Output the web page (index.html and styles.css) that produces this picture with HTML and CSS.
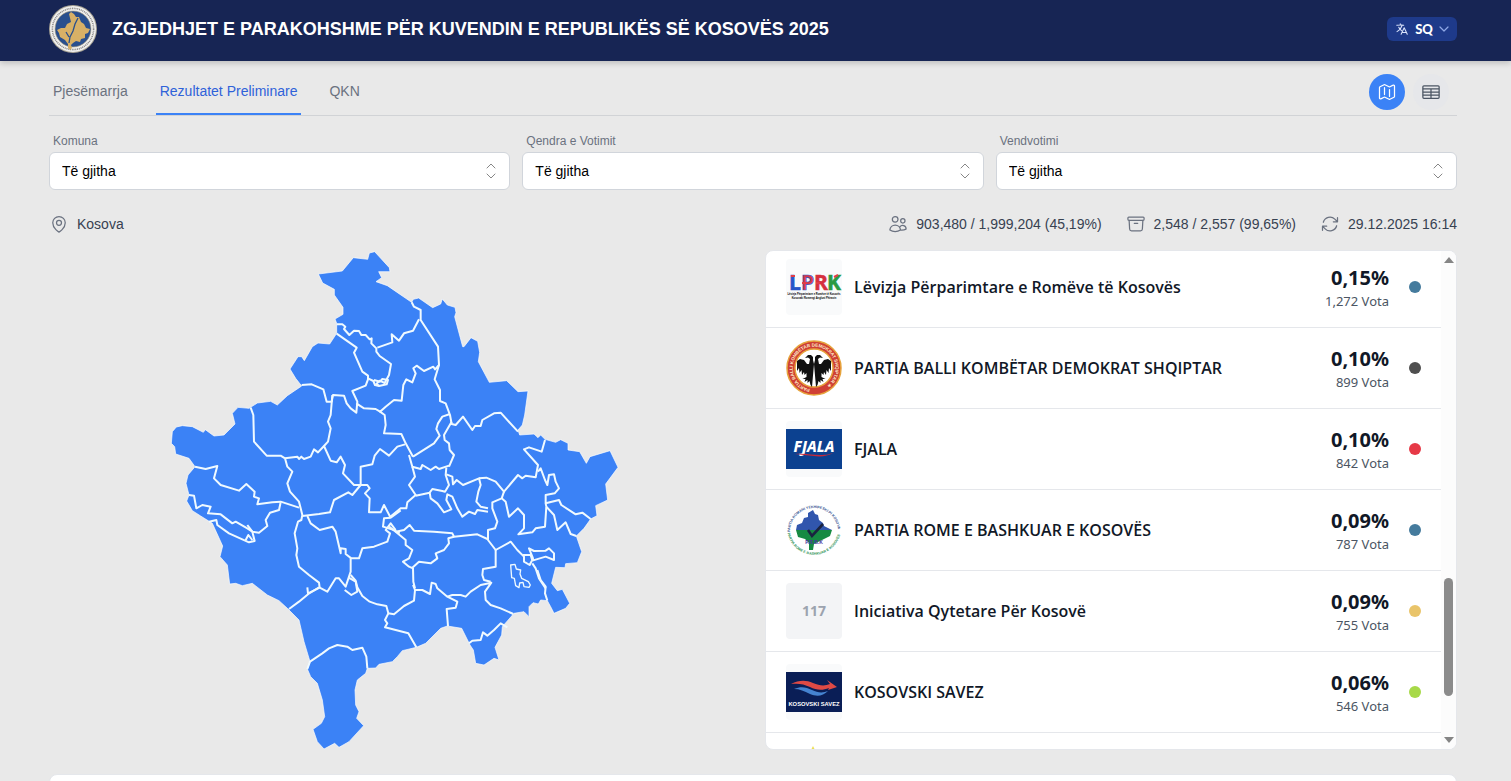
FILE: index.html
```html
<!DOCTYPE html>
<html lang="sq">
<head>
    <meta charset="UTF-8">
    <meta name="viewport" content="width=device-width, initial-scale=1.0">
    <title>Zgjedhjet e Parakohshme 2025</title>
    <link rel="stylesheet" href="styles.css">
</head>
<body>

    <header class="header">
        <svg class="seal" viewBox="0 0 48 48" aria-hidden="true">
            <circle cx="24" cy="24" r="24" fill="#a9a496"/>
            <circle cx="24" cy="24" r="23" fill="#f1f1f0"/>
            <circle cx="24" cy="24" r="20.6" fill="none" stroke="#8a8784" stroke-width="1.6" stroke-dasharray="1 .8"/>
            <circle cx="24" cy="24" r="18" fill="#294f8e" stroke="#b7a57c" stroke-width=".6"/>
            <path fill="#d8b066" d="M20 9l2-2 3 2 2 3 3 0 2 5 3 2 2 4 4 1-2 4-3 1 0 4-4 1-1 3-4-1-3 2-2 2 1 3-2 2-2-2 0-4-3-4-5-3-1-4-2-3 4-2 4 0 2-4 4-2z"/>
            <path fill="none" stroke="#294f8e" stroke-width="1.3" d="M29 13l-3 6-2 7-3 6-1 6M17 27l3 5"/>
        </svg>
        <h1>ZGJEDHJET E PARAKOHSHME PËR KUVENDIN E REPUBLIKËS SË KOSOVËS 2025</h1>
        <button class="lang" type="button">
            <svg width="14" height="14" viewBox="0 0 24 24" fill="none" stroke="#dbe4fb" stroke-width="1.8" stroke-linecap="round" stroke-linejoin="round"><path d="M10.5 21l5.25-11.25L21 21m-9-3h7.5M3 5.6A48 48 0 0 1 9 5.25m0 0a48 48 0 0 1 3.3.1M9 5.25V3m3.3 2.4A18 18 0 0 1 3.4 16.5m8.9-11.1c.9 0 1.8.1 2.7.2M6.4 9a18 18 0 0 0 4.8 5.8"/></svg>
            <span>SQ</span>
            <svg width="10" height="10" viewBox="0 0 10 10" fill="none" stroke="#8fa8e6" stroke-width="1.2" stroke-linecap="round" stroke-linejoin="round"><path d="M1 3l4 4 4-4"/></svg>
        </button>
    </header>

    <main class="container">
        <div class="toolbar">
            <nav class="tabs">
                <a href="#pjesemarrja">Pjesëmarrja</a>
                <a href="#rezultatet" class="active">Rezultatet Preliminare</a>
                <a href="#qkn">QKN</a>
            </nav>
            <div class="views">
                <button class="view view-on" type="button" aria-label="Harta">
                    <svg width="20" height="20" viewBox="0 0 24 24" fill="none" stroke="#fff" stroke-width="1.5" stroke-linecap="round" stroke-linejoin="round"><path d="M9 6.75V15m6-6v8.25m.5 3.5l4.9-2.4c.4-.2.6-.6.6-1V4.8c0-.8-.9-1.4-1.6-1L15.5 5.7c-.3.2-.7.2-1 0L9.5 3.25a1.1 1.1 0 0 0-1 0L3.6 5.7c-.4.2-.6.5-.6 1v12.5c0 .8.9 1.4 1.6 1l3.9-1.95c.3-.15.7-.15 1 0l5 2.5c.3.15.7.15 1 0z"/></svg>
                </button>
                <button class="view" type="button" aria-label="Tabela">
                    <svg width="20" height="20" viewBox="0 0 24 24" fill="none" stroke="#4b5563" stroke-width="1.5" stroke-linejoin="round"><rect x="2.25" y="4.5" width="19.5" height="15" rx="1.2"/><path d="M2.25 8.25h19.5M2.25 12h19.5M2.25 15.75h19.5M12 8.25v11.25"/></svg>
                </button>
            </div>
        </div>

        <form class="filters">
            <div class="field">
                <label for="komuna">Komuna</label>
                <select id="komuna"><option>Të gjitha</option></select>
                <svg class="updown" viewBox="0 0 12 16"><path d="M2 5l4-4 4 4M2 11l4 4 4-4"/></svg>
            </div>
            <div class="field">
                <label for="qendra">Qendra e Votimit</label>
                <select id="qendra"><option>Të gjitha</option></select>
                <svg class="updown" viewBox="0 0 12 16"><path d="M2 5l4-4 4 4M2 11l4 4 4-4"/></svg>
            </div>
            <div class="field">
                <label for="vendvotimi">Vendvotimi</label>
                <select id="vendvotimi"><option>Të gjitha</option></select>
                <svg class="updown" viewBox="0 0 12 16"><path d="M2 5l4-4 4 4M2 11l4 4 4-4"/></svg>
            </div>
        </form>

        <div class="summary">
            <div class="stat place">
                <svg viewBox="0 0 24 24"><path d="M15 10.5a3 3 0 1 1-6 0 3 3 0 0 1 6 0zM19.5 10.5c0 7.1-7.5 11.25-7.5 11.25S4.5 17.6 4.5 10.5a7.5 7.5 0 1 1 15 0z"/></svg>
                <span>Kosova</span>
            </div>
            <div class="stat">
                <svg viewBox="0 0 24 24"><circle cx="8.6" cy="6.4" r="3.4"/><circle cx="17.8" cy="8.2" r="2.6"/><path d="M2.25 19.1a6.4 6.4 0 0 1 12.75 0v.1A12.3 12.3 0 0 1 8.6 21c-2.3 0-4.5-.6-6.35-1.8zM15 19.2c2.3.3 4.7-.1 6.700-1.100a4.100 4.100 0 0 0-7.500-2.500"/></svg>
                <span>903,480 / 1,999,204 (45,19%)</span>
            </div>
            <div class="stat">
                <svg viewBox="0 0 24 24"><path d="M20.25 7.5l-.6 10.6a2.25 2.25 0 0 1-2.25 2.15H6.6a2.25 2.25 0 0 1-2.25-2.15L3.75 7.5M10 11.25h4M3.4 7.5h17.2c.6 0 1.100-.5 1.100-1.100V4.900c0-.6-.5-1.100-1.100-1.100H3.400c-.6 0-1.100.5-1.100 1.100v1.500c0 .6.5 1.100 1.100 1.100z"/></svg>
                <span>2,548 / 2,557 (99,65%)</span>
            </div>
            <div class="stat">
                <svg viewBox="0 0 24 24"><path d="M16 9.35h5V4.4M3 19.6v-5h5M3 14.6l3.2 3.2a8.25 8.25 0 0 0 13.8-3.7M4 9.9a8.25 8.25 0 0 1 13.8-3.7L21 9.35"/></svg>
                <span>29.12.2025 16:14</span>
            </div>
        </div>

        <div class="results">
            <svg class="map" viewBox="18 15 1350 1500" role="img" aria-label="Harta e Kosovës">
                <path class="land" d="M463 87L535 78 568 38 611 43 616 24 632 20 676 68 678 80 644 80 653 98 636 110 670 122 705 146 743 172 748 163 764 159 806 188 830 177 835 162 850 180 873 187 876 203 872 215 896 305 900 305 921 278 941 289 947 322 943 350 976 412 1028 407 1062 440 1092 438 1082 510 1075 540 1062 555 1067 570 1110 567 1122 578 1130 570 1143 583 1175 592 1190 584 1212 595 1212 615 1247 620 1267 655 1278 635 1338 617 1362 667 1325 717 1331 765 1295 782 1299 812 1280 822 1260 850 1237 873 1253 920 1240 953 1205 956 1203 968 1175 967 1163 1015 1180 1037 1195 1033 1204 1050 1217 1075 1205 1090 1170 1105 1160 1085 1150 1067 1130 1065 1123 1077 1107 1073 1095 1085 1095 1115 1080 1100 1050 1105 1015 1145 1013 1170 993 1207 1005 1245 990 1240 960 1260 935 1255 928 1215 918 1200 893 1150 850 1143 830 1150 785 1195 757 1207 715 1217 700 1235 685 1250 645 1258 635 1269 610 1270 605 1285 580 1305 573 1335 575 1380 585 1400 578 1420 599 1442 555 1490 525 1507 512 1495 480 1512 460 1490 447 1453 472 1435 482 1415 475 1365 460 1315 440 1295 430 1272 438 1250 420 1190 405 1125 370 1090 345 1067 310 1050 265 1015 235 1022 215 1015 197 1017 190 960 168 935 176 903 145 835 110 813 85 797 68 768 75 750 66 715 72 690 93 665 75 640 35 627 32 605 22 595 25 560 37 546 55 542 85 545 118 562 124 554 150 573 180 570 213 537 205 505 222 487 255 490 280 474 320 469 340 480 370 452 413 423 395 400 378 372 402 335 413 335 421 347 445 305 462 294 497 297 518 265 518 235 513 222 537 208 537 187 511 150 511 133 476 114z"/>
                <g class="borders">
                    <!-- north west -->
                    <path d="M518 238h17l9 7-4 7 16 18 14-13 15 1 7 12h13l12 13 6-3-1 15 15 15v10l10 13 34 24-6 33-13 24-15-7-10 10 8 5"/>
                    <path d="M640 308L685 292 683 268 705 287 720 265 747 257 765 223"/>
                    <path d="M518 266L578 308 570 323 595 380 612 392 612 403 605 422 565 438 580 470 577 503 560 490 548 475 540 452 507 450 503 470 488 470 478 433 443 418 413 420"/>
                    <path d="M612 400l16 8 5 12 12 3 23-5 4-13-17-3-7 8-18-5"/>
                    <path d="M577 475L600 490 635 492 648 500 665 485 690 465 713 467 718 420 727 403 745 412 755 385 748 370 758 362 780 378 808 365 813 373 825 360"/>
                    <path d="M648 500L662 510 665 540 660 565 712 567 725 595 747 635"/>
                    <path d="M505 450L500 510 492 530 500 550 492 590 480 603M260 488L268 510 270 590 308 632 350 632 363 640"/>
                </g>
                <g class="borders" transform="translate(675)">
                    <!-- north east -->
                    <path d="M68 172l7 13 20 10v30l52 80 3 55-13 43 16 32v33l17 7 13 35 5 27 12 3 22-25 28 40 8-12h17l5-18 35-20 20-2 52 57"/>
                    <path d="M183 507l-23 8-13 20-5 17 10 20-17 23-63 40"/>
                </g>
                <g class="borders" transform="translate(0 510)">
                    <!-- west -->
                    <path d="M363 130l37-5 5 7 7-7 8 7 20-7 10-22 12 9 18-19 20 44 18 5 12-17 13 25-6 25 33 35h20v-55l35-7 7-26 16-20 27 20 25-27 23-7"/>
                    <path d="M363 130L370 155 385 170 370 205 378 230 405 260 410 280 415 300 412 315 402 320 392 355 400 400 397 420 405 455 435 480 465 503 467 518"/>
                    <path d="M590 210L565 240 553 232 510 255 498 292 465 297 415 303"/>
                    <path d="M590 210h20l7 10-14 15 14 15-2 42h35l10-22 20 38 30-22M680 308l-20 2-3 25 33 10 17 10"/>
                    <path d="M430 303L440 325 467 345 505 335 515 350 530 415 530 400 545 402 545 417 562 430 585 430 595 400 630 395 670 380 678 355 665 345 680 325 695 345"/>
                    <path d="M560 430v40l-15 45-20-25h-10l-25 40-23-12-35 17-2-18M553 487l22 13 5 30-18 10-20-15"/>
                    <path d="M93 155L125 162 160 153 150 190 170 210 225 227 247 207 272 230 270 245 285 250 280 268 325 262 350 260 405 278"/>
                    <path d="M350 262L345 285 318 293 305 315 310 333 285 353 265 350 250 330"/>
                    <path d="M75 240L90 242 97 280 115 270 140 275 132 295 170 298 205 325 215 320 250 340 265 350 272 378 255 382 195 355 160 330 157 315 135 320M245 375l8-15 12 15"/>
                </g>
                <g class="borders" transform="translate(675 510)">
                    <!-- east -->
                    <path d="M188 20L165 60 167 75 180 85 182 105 195 120 180 155"/>
                    <path d="M60 120L70 155 95 162 100 150 125 165 140 155 150 162 180 152"/>
                    <path d="M70 155L78 185 60 210 80 240 55 262 52 280 35 280 0 308M80 242L122 233 130 222 160 228 168 230 180 210 170 180 172 158"/>
                    <path d="M122 233L125 250 145 265 165 292 187 283 172 255 175 238 190 245 205 280 220 305 240 290 258 297 265 285 297 290"/>
                    <path d="M172 178L190 185 192 208 203 195 222 210 270 190 275 210 268 230 262 260 275 275 297 280"/>
                    <path d="M270 190L292 188 320 200 345 230 387 180 400 190 410 182 440 187 447 150 405 103 420 97 458 110 468 75"/>
                    <path d="M345 230L338 250 310 262 310 280 325 320 318 340 297 345 297 375 320 405M338 250L350 260 360 305 387 280 405 300 405 340 388 358 430 352 440 340 468 335 472 275"/>
                    <path d="M447 170L455 160 468 195 475 210 480 180 495 178 500 200 510 220 497 235 470 240 470 265 510 255 517 270 560 298 580 293 605 312"/>
                    <path d="M472 275L495 300 505 345 530 322 545 357 562 363M470 265l2 10"/>
                    <path d="M0 335L20 350 45 345 62 330 75 347 135 350 190 355 195 365 265 358 295 372"/>
                    <path d="M20 350L50 375 50 390 70 405 60 430 42 440 60 455 72 460 73 500 78 520M70 458L90 440 125 445 145 430 140 415 165 405 180 385 178 370 195 365"/>
                    <path d="M320 405L320 455 282 462 280 480 285 495 305 500"/>
                    <path d="M320 405L365 380 385 405 405 425 405 440 422 450 432 430 420 400 435 408 470 407 480 400 495 415 495 435 470 425 430 437 425 420 402 420M430 445L440 460 450 490 470 520"/>
                    <path class="thin" d="M365 450l13-2 4 14 13 3-2 12 5 13 20 10 6 10-4 7-15-2-3-13-10 2-2 14-10-6-4-22-8-2z"/>
                </g>
                <g class="borders" transform="translate(345 975)">
                    <!-- south -->
                    <path d="M30 117L60 95 88 72 120 52"/>
                    <path d="M215 15L230 32 235 52 250 78 272 95 295 103 322 108 328 130 345 133 375 108 405 92 408 60 402 45"/>
                    <path d="M328 130L318 150 325 160 318 172 388 190 412 232"/>
                    <path d="M408 60L430 60 453 72 458 38 470 42 475 55 505 80 535 95 530 113 503 117 507 168"/>
                    <path d="M505 80L520 75 545 75 560 80 575 65 605 45 637 38 618 65 620 90 635 105 665 115 703 132"/>
                    <path d="M570 220L580 212 605 210 612 187 625 197 645 180 665 160 685 172M775 0L785 30 800 50 798 70 805 92"/>
                    <path d="M85 297L93 275 130 250 150 235 175 225 205 230 220 240 250 233 262 260 265 295"/>
                </g>
            </svg>

            <section class="panel">
                <ul class="parties">
                    <li class="party">
                        <svg class="logo tint" viewBox="0 0 56 56">
                            <g font-family="Open Sans" font-weight="700" font-size="21" stroke-width=".6">
                                <text x="3" y="31" fill="#2856c8" stroke="#2856c8">L</text><text x="15" y="31" fill="#d63a4c" stroke="#2856c8">P</text><text x="28" y="31" fill="#d6303e" stroke="#d6303e">R</text><text x="41" y="31" fill="#2b9a43" stroke="#2b9a43">K</text>
                            </g>
                            <path d="M5 17h4M16 24h5M30 24h4M48 18l4-2" stroke="#e13d46" stroke-width="2"/>
                            <text x="28" y="36" font-family="Liberation Sans" font-weight="700" font-size="2.6" text-anchor="middle">Lëvizja Përparimtare e Romëve të Kosovës</text>
                            <text x="28" y="40" font-family="Liberation Sans" font-weight="700" font-size="2.6" text-anchor="middle">Kosovaki Romengi Angluni Phiravin</text>
                        </svg>
                        <h2>Lëvizja Përparimtare e Romëve të Kosovës</h2>
                        <div class="votes"><strong>0,15%</strong><span>1,272 Vota</span></div>
                        <i class="dot blue"></i>
                    </li>
                    <li class="party">
                        <svg class="logo" viewBox="0 0 56 56">
                            <circle cx="28" cy="28" r="27" fill="#cf3f34" stroke="#e6a33c" stroke-width="1.5"/>
                            <circle cx="28" cy="28" r="19" fill="#fff" stroke="#e6a33c" stroke-width="1.5"/>
                            <path id="ring" fill="none" d="M24 49A21.400 21.400 0 1 1 26 49.300"/>
                            <text font-family="Liberation Sans" font-weight="700" font-size="4.6" fill="#fbe9c8"><textPath href="#ring">PARTIA BALLI KOMBËTAR DEMOKRAT SHQIPTAR ★</textPath></text>
                            <g fill="#111">
                                <path id="wing" d="M28 24l1-4 0-3 2-2 3 0 3 3-3-.5-2 1.500 1 5 2 0 3-4 4-1 3 2 0 10-2-3-.5 5-2-3-.5 5-2-3-.5 3-2-2 0 4 4 2-3 0 1 3-3-2 0 3-2-2-1 4-1.500 2z"/>
                                <path d="M28 24l-1-4 0-3-2-2-3 0-3 3 3-.5 2 1.500-1 5-2 0-3-4-4-1-3 2 0 10 2-3 .5 5 2-3 .5 5 2-3 .5 3 2-2 0 4-4 2 3 0-1 3 3-2 0 3 2-2 1 4 1.500 2z"/>
                            </g>
                        </svg>
                        <h2>PARTIA BALLI KOMBËTAR DEMOKRAT SHQIPTAR</h2>
                        <div class="votes"><strong>0,10%</strong><span>899 Vota</span></div>
                        <i class="dot gray"></i>
                    </li>
                    <li class="party">
                        <svg class="logo tint" viewBox="0 0 56 56">
                            <rect y="8" width="56" height="40" fill="#0c4190"/>
                            <text x="28" y="31" font-family="Noto Sans" font-weight="800" font-style="italic" font-size="15" text-anchor="middle" fill="#fff">FJALA</text>
                            <path d="M9 33c10-1 18 1 25 1s10-1 13-2c-5 3-12 4-19 3s-13-1-19-2z" fill="#c82839"/>
                        </svg>
                        <h2>FJALA</h2>
                        <div class="votes"><strong>0,10%</strong><span>842 Vota</span></div>
                        <i class="dot red"></i>
                    </li>
                    <li class="party">
                        <svg class="logo" viewBox="0 0 56 56">
                            <path id="rometop" fill="none" d="M4 30A24 24 0 1 1 52 30"/>
                            <path id="romelow" fill="none" d="M1.500 31A27 27 0 0 0 54.500 31"/>
                            <text font-family="Liberation Sans" font-weight="700" font-size="3.6" fill="#3b5794"><textPath href="#rometop">PARTIA ROMANI YEKHIPESKI PI KOSOVA</textPath></text>
                            <text font-family="Liberation Sans" font-weight="700" font-size="3.6" fill="#2b9154"><textPath href="#romelow">PARTIA ROME E BASHKUAR E KOSOVËS</textPath></text>
                            <path fill="#3156ad" d="M10 28l1-5 5-2 2-5 4-1 0-4 5-3 2 4 3 1 1 5 4 3 1 3 6 3 2 1z"/>
                            <path fill="#168a42" d="M10 28h36l-2 6-6 3-6 3-4 2-1 6-4 0 0-7-4-4-7-2z"/>
                            <path fill="none" stroke="#1a2340" stroke-width="2.600" d="M22 28l4 6 11-12"/>
                            <text x="28" y="42" font-family="Liberation Sans" font-weight="700" font-size="5" text-anchor="middle" fill="#4b35a0">P.R.B.K</text>
                        </svg>
                        <h2>PARTIA ROME E BASHKUAR E KOSOVËS</h2>
                        <div class="votes"><strong>0,09%</strong><span>787 Vota</span></div>
                        <i class="dot blue"></i>
                    </li>
                    <li class="party">
                        <span class="logo number">117</span>
                        <h2>Iniciativa Qytetare Për Kosovë</h2>
                        <div class="votes"><strong>0,09%</strong><span>755 Vota</span></div>
                        <i class="dot yellow"></i>
                    </li>
                    <li class="party">
                        <svg class="logo tint" viewBox="0 0 56 56">
                            <rect y="8" width="56" height="40" fill="#0a1e56"/>
                            <path fill="#df4a45" d="M5 20c8-4 15-4 22-1 7 3 12 3 17 1l-3-4 10 7-9 3 1-2c-7 3-13 2-19-1-6-3-12-4-19-3z"/>
                            <path fill="#4583d0" d="M8 25c7-3 12-2 18 1 6 3 11 3 16 1-5 5-11 6-18 3-6-3-10-5-16-5z"/>
                            <text x="28" y="42" font-family="Liberation Sans" font-weight="700" font-size="5.8" text-anchor="middle" fill="#fff">KOSOVSKI SAVEZ</text>
                        </svg>
                        <h2>KOSOVSKI SAVEZ</h2>
                        <div class="votes"><strong>0,06%</strong><span>546 Vota</span></div>
                        <i class="dot green"></i>
                    </li>
                    <li class="party">
                        <svg class="logo" viewBox="0 0 56 56"><path fill="#ecdf55" d="M27 1l1.5 3 3 .3-2.3 2 .7 3-2.9-1.6-2.9 1.6.7-3-2.3-2 3-.3z"/></svg>
                    </li>
                </ul>
                <div class="scrollbar">
                    <svg width="10" height="6" viewBox="0 0 10 6"><path d="M0 6l5-6 5 6z"/></svg>
                    <span class="thumb"></span>
                    <svg width="10" height="6" viewBox="0 0 10 6"><path d="M0 0l5 6 5-6z"/></svg>
                </div>
            </section>
        </div>

        <section class="card"></section>
    </main>

</body>
</html>
```
FILE: styles.css
```css
* { box-sizing: border-box; }
body { margin: 0; height: 100vh; overflow: hidden; background: #e9e9e9; font-family: "Liberation Sans", Arial, sans-serif; font-size: 14px; color: #374151; }
h1, h2, ul { margin: 0; padding: 0; }
button { border: none; cursor: pointer; padding: 0; }

.header { display: flex; align-items: center; gap: 15px; height: 61px; padding: 0 54px 4px 49px; background: #172554; box-shadow: 0 2px 6px rgba(0, 0, 0, 0.2); }
.seal { width: 48px; height: 48px; }
.header h1 { flex: 1; font-size: 18px; line-height: 28px; color: white; }
.lang { display: flex; align-items: center; justify-content: center; gap: 6px; width: 70px; height: 24px; border-radius: 6px; background: #1e3a8a; color: white; font-family: Lato, sans-serif; font-size: 13px; font-weight: 900; }

.container { padding: 8px 54px 0 49px; }
.toolbar { display: flex; justify-content: space-between; height: 47px; border-bottom: 1px solid #d1d3d6; }
.tabs { display: flex; gap: 24px; }
.tabs a { height: 46px; padding: 0 4px; line-height: 45px; color: #6b7280; text-decoration: none; }
.tabs .active { color: #2f62d9; border-bottom: 2px solid #3b82f6; }
.views { display: flex; align-items: center; gap: 8px; padding-right: 8px; }
.view { display: flex; align-items: center; justify-content: center; width: 36px; height: 36px; border-radius: 50%; background: #e6e7ea; }
.view-on { background: #3b82f6; }

.filters { display: flex; gap: 12px; padding-top: 16px; }
.field { position: relative; flex: 1; }
.field label { display: block; margin-bottom: 2px; padding-left: 4px; font-size: 12px; line-height: 18px; color: #6b7280; }
.field select { appearance: none; display: block; width: 100%; height: 38px; padding: 0 12px; border: 1px solid #d1d5db; border-radius: 6px; background: white; font: inherit; color: black; }
.updown { position: absolute; right: 13px; bottom: 11px; width: 12px; height: 16px; fill: none; stroke: #868686; stroke-linecap: round; stroke-linejoin: round; pointer-events: none; }

.summary { display: flex; align-items: center; gap: 24px; padding: 24px 0 16px; }
.stat { display: flex; align-items: center; gap: 8px; line-height: 20px; }
.stat svg { width: 20px; height: 20px; fill: none; stroke: #6b7280; stroke-width: 1.5; stroke-linecap: round; stroke-linejoin: round; }
.place { flex: 1; }

.results { display: grid; grid-template-columns: 1fr 1fr; gap: 24px; }
.map { width: 100%; height: 500px; }
.land { fill: #3b82f6; stroke: white; stroke-width: 2; }
.borders { fill: none; stroke: #f0faff; stroke-width: 6; stroke-linejoin: round; }
.borders .thin { stroke-width: 4; }

.panel { display: flex; height: 500px; overflow: hidden; border: 1px solid #e5e7eb; border-radius: 8px; background: white; }
.parties { flex: 1; margin-top: -4px; list-style: none; font-family: "Noto Sans", sans-serif; }
.party { display: flex; align-items: center; height: 81px; padding: 0 20px; border-bottom: 1px solid #e5e7eb; }
.logo { width: 56px; height: 56px; margin-right: 12px; border-radius: 4px; }
.tint { background: #f9fafb; }
.number { background: #f3f4f6; color: #9ca3af; font-size: 14px; font-weight: 700; line-height: 56px; text-align: center; }
.party h2 { flex: 1; font-family: "Open Sans", sans-serif; font-size: 16px; font-weight: 600; line-height: 24px; color: #111827; }
.votes { display: flex; flex-direction: column; padding-top: 2px; text-align: right; }
.votes strong { font-size: 20px; font-weight: 700; line-height: 26px; color: #111827; }
.votes span { font-size: 13px; line-height: 20px; color: #4b5563; }
.dot { width: 12px; height: 12px; margin-left: 20px; border-radius: 50%; }
.blue { background: #457b9d; }
.gray { background: #4f4f4f; }
.red { background: #e63946; }
.yellow { background: #e9c46a; }
.green { background: #a7d948; }

.scrollbar { display: flex; flex-direction: column; align-items: center; width: 15px; padding: 6px 0; background: #fcfcfc; }
.scrollbar svg { fill: #858585; }
.thumb { width: 9px; height: 118px; margin: auto 0 41px; border-radius: 5px; background: #8b8b8b; }

.card { height: 120px; margin-top: 24px; border: 1px solid #e5e7eb; border-radius: 8px; background: white; }
```
